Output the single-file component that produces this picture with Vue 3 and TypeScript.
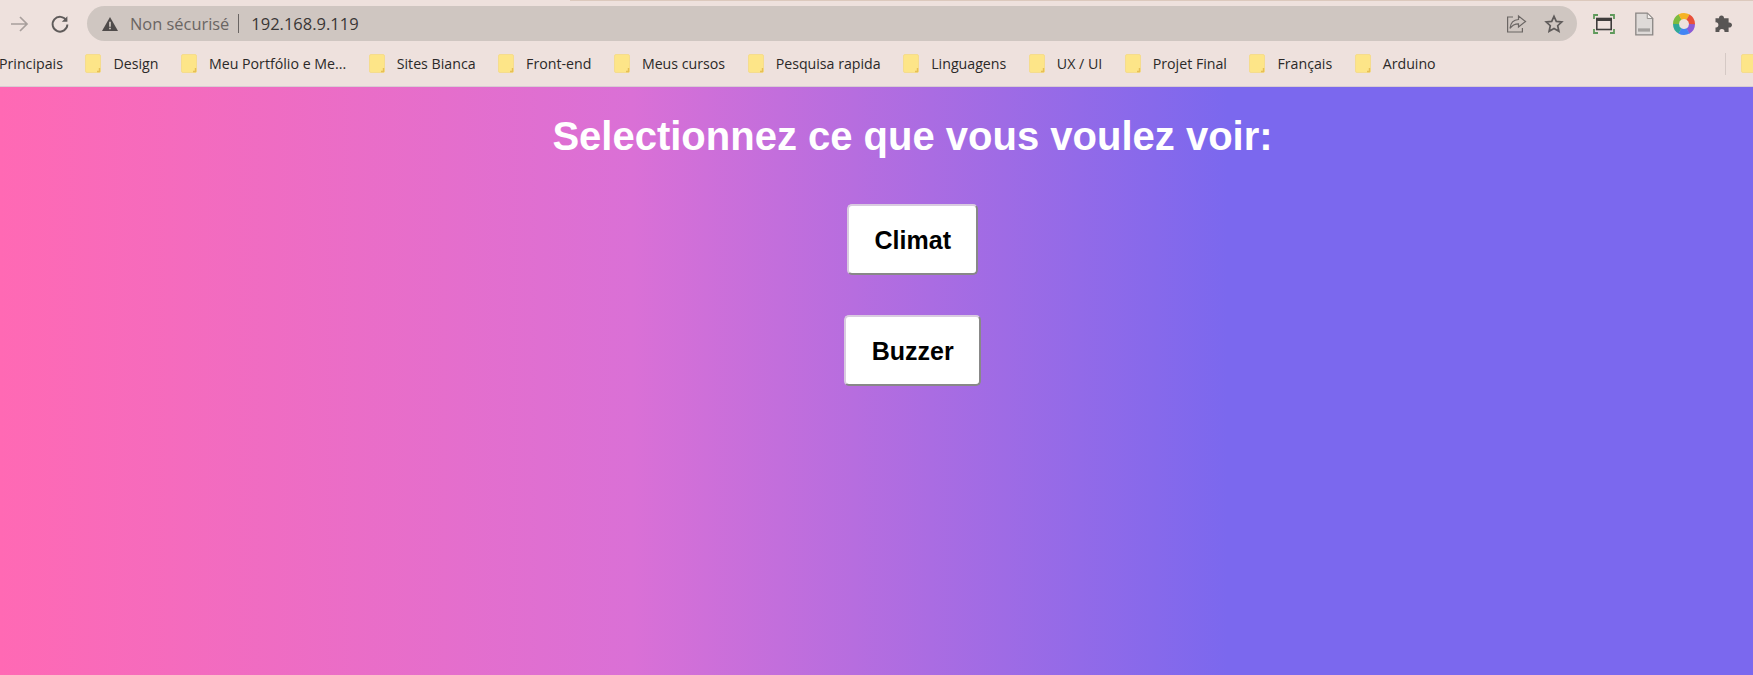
<template>
  <div class="window">
    <div class="tabstrip"></div>
    <header class="toolbar">
      <svg class="nav-icon" width="22" height="22" viewBox="0 0 22 22" fill="none" stroke="#a89f9c" stroke-width="1.7">
        <path d="M3 11h16M12 4l7 7-7 7" />
      </svg>
      <svg class="nav-icon" width="22" height="22" viewBox="0 0 22 22" fill="none" stroke="#5f5b5a" stroke-width="1.9">
        <path d="M17.400 7.500A7.400 7.400 0 1 0 18.400 11.500" />
        <path d="M18.400 3.200v5.600h-5.600" fill="#5f5b5a" stroke="none" />
      </svg>
      <div class="address">
        <svg class="warn" width="18" height="16" viewBox="0 0 16 15">
          <path d="M8 1l7.500 13H.5z" fill="#4f4b4a" />
          <path d="M7.200 5.500h1.600v4.500H7.200zM7.200 11h1.600v1.500H7.200z" fill="#d0c7c2" />
        </svg>
        <span class="insecure">Non sécurisé</span>
        <span class="divider"></span>
        <span class="url">192.168.9.119</span>
        <svg class="share" width="22" height="22" viewBox="0 0 22 22" fill="none" stroke="#6b6664" stroke-width="1.2">
          <path d="M8 4H2.600v15h14.800v-4" />
          <path d="M13.500 3l7 5.500-7 5.500v-3.200c-4 0-6.500 1.500-8.500 4.500 .5-5 3.500-8.500 8.500-8.800z" />
        </svg>
        <svg class="star" width="20" height="20" viewBox="0 0 20 20" fill="none" stroke="#5f5b5a" stroke-width="1.7">
          <path d="M10 2.300l2.300 5.100 5.500.6-4.100 3.700 1.200 5.500L10 14.400l-4.900 2.800 1.200-5.500L2.200 8l5.500-.6z" />
        </svg>
      </div>
      <div class="extensions">
        <svg width="22" height="20" viewBox="0 0 22 20" fill="none">
          <path d="M1 5V1h4M17 1h4v4M1 15v4h4M21 15v4h-4" stroke="#5f9a5b" stroke-width="1.8" />
          <rect x="3.800" y="4.500" width="14.400" height="11" fill="none" stroke="#3f3d3c" stroke-width="1.6" />
          <rect x="3.800" y="4.500" width="14.400" height="2.500" fill="#3f3d3c" />
        </svg>
        <svg width="20" height="24" viewBox="0 0 18 22">
          <path d="M1.500 1h10.500l5 5v15H1.500z" fill="#dedad8" stroke="#8a8684" stroke-width="1.2" />
          <path d="M12 1v5h5z" fill="#f3efed" stroke="#8a8684" stroke-width=".8" />
          <rect x="3.500" y="15" width="11" height="3" fill="#a3a09e" />
        </svg>
        <svg width="22" height="22" viewBox="0 0 22 22" fill="none" stroke-width="6">
          <circle v-for="arc in ringArcs" :key="arc.color" cx="11" cy="11" r="8" :stroke="arc.color" :stroke-dasharray="arc.dash" :stroke-dashoffset="arc.offset" pathLength="100" />
        </svg>
        <svg width="20" height="20" viewBox="0 0 20 20">
          <path d="M7.500 1.500c1.600 0 2.600 1.200 2.500 2.700h4.600v4.300c1.700-.4 3.400.6 3.400 2.400s-1.700 2.900-3.400 2.500v4.600H10.500c.3-1.800-.9-3-2.600-3s-2.900 1.200-2.500 3H1.500v-4.600c1.700.4 2.900-.9 2.900-2.500s-1.200-2.800-2.900-2.500V4.200h3.500C4.900 2.700 5.900 1.500 7.500 1.500z" fill="#585554" />
        </svg>
      </div>
    </header>

    <nav class="bookmarks">
      <span class="bookmark bookmark--plain">Principais</span>
      <span v-for="name in bookmarks" :key="name" class="bookmark">
        <svg width="16" height="19" viewBox="0 0 16 19">
          <rect x=".5" y=".5" width="15" height="18" rx="1.500" fill="#fde588" stroke="#f5dc8e" />
          <path d="M12 17.500h2.500V14" fill="none" stroke="#e6bf55" stroke-width="1.400" />
        </svg>
        {{ name }}
      </span>
      <span class="bookmarks__sep"></span>
      <svg class="bookmarks__more" width="16" height="19" viewBox="0 0 16 19">
        <rect x=".5" y=".5" width="15" height="18" rx="1.500" fill="#fde588" stroke="#f5dc8e" />
      </svg>
    </nav>

    <main class="page">
      <h1 class="title">Selectionnez ce que vous voulez voir:</h1>
      <button class="choice">Climat</button>
      <button class="choice">Buzzer</button>
    </main>
  </div>
</template>

<script setup lang="ts">
const bookmarks: string[] = [
  'Design',
  'Meu Portfólio e Me...',
  'Sites Bianca',
  'Front-end',
  'Meus cursos',
  'Pesquisa rapida',
  'Linguagens',
  'UX / UI',
  'Projet Final',
  'Français',
  'Arduino',
]

// ring segments, clockwise from 3 o'clock
const colors = ['#8a5bd6', '#4285f4', '#2fa79a', '#7cbb3f', '#f5b324', '#e8503a']
const ringArcs = colors.map((color, i) => ({
  color,
  dash: '17 83',
  offset: String(-i * 16.67),
}))
</script>

<style>
html,
body {
  margin: 0;
  height: 100%;
  overflow: hidden;
}
</style>

<style scoped>
.window {
  width: 1753px;
  height: 675px;
  display: flex;
  flex-direction: column;
  font-family: "Open Sans", "Noto Sans", sans-serif;
  background: #eee1dd;
}

.tabstrip {
  height: 1px;
  margin-left: 570px;
  background: #dcc9bd;
  flex: none;
}

.toolbar {
  height: 35px;
  margin-top: 5px;
  display: flex;
  align-items: center;
  flex: none;
}

.nav-icon {
  flex: none;
  margin-left: 8px;
}

.nav-icon + .nav-icon {
  margin-left: 19px;
}

.address {
  width: 1490px;
  height: 35px;
  margin-left: 16px;
  padding: 0 13px 0 14px;
  box-sizing: border-box;
  border-radius: 18px;
  background: #cfc6c1;
  display: flex;
  align-items: center;
  color: #45413f;
  font-size: 16px;
}

.warn {
  flex: none;
}

.insecure {
  margin-left: 11px;
  color: #6a6563;
  font-size: 16.4px;
}

.divider {
  width: 1px;
  height: 19px;
  margin: 0 12px 0 9px;
  background: #6a6563;
}

.url {
  flex: 1;
  color: #3a3736;
  font-size: 16.5px;
}

.star {
  margin-left: 17px;
}

.extensions {
  display: flex;
  align-items: center;
  gap: 19px;
  margin-left: 16px;
}

.bookmarks {
  height: 46px;
  flex: none;
  display: flex;
  align-items: center;
  gap: 22.5px;
  font-size: 14.2px;
  color: #2b2928;
  overflow: hidden;
  box-sizing: border-box;
  border-bottom: 1px solid #d8ccd2;
}

.bookmark {
  display: flex;
  align-items: center;
  gap: 12px;
  white-space: nowrap;
  flex: none;
}

.bookmark--plain {
  margin-left: -1px;
}

.bookmarks__sep {
  width: 1px;
  height: 22px;
  margin-left: 267px;
  background: #d5c9c5;
  flex: none;
}

.bookmarks__more {
  flex: none;
  margin-left: -8px;
}

.page {
  flex: 1;
  display: flex;
  flex-direction: column;
  align-items: center;
  padding-left: 72px;
  background: linear-gradient(to right, #ff69b4, #da70d6 36%, #7b68ee 70%);
}

.title {
  margin: 26px 0 45px;
  font-family: "Liberation Sans", Arial, sans-serif;
  font-size: 40px;
  line-height: 46px;
  font-weight: 700;
  color: #fff;
}

.choice {
  padding: 21px 25px 19px 25.5px;
  margin-bottom: 40px;
  border: 2px solid;
  border-color: #d9cbe0 #888 #888 #d9cbe0;
  border-radius: 5px;
  background: #fff;
  color: #000;
  font-family: "Liberation Sans", Arial, sans-serif;
  font-size: 25px;
  line-height: 27px;
  font-weight: 700;
}
</style>
